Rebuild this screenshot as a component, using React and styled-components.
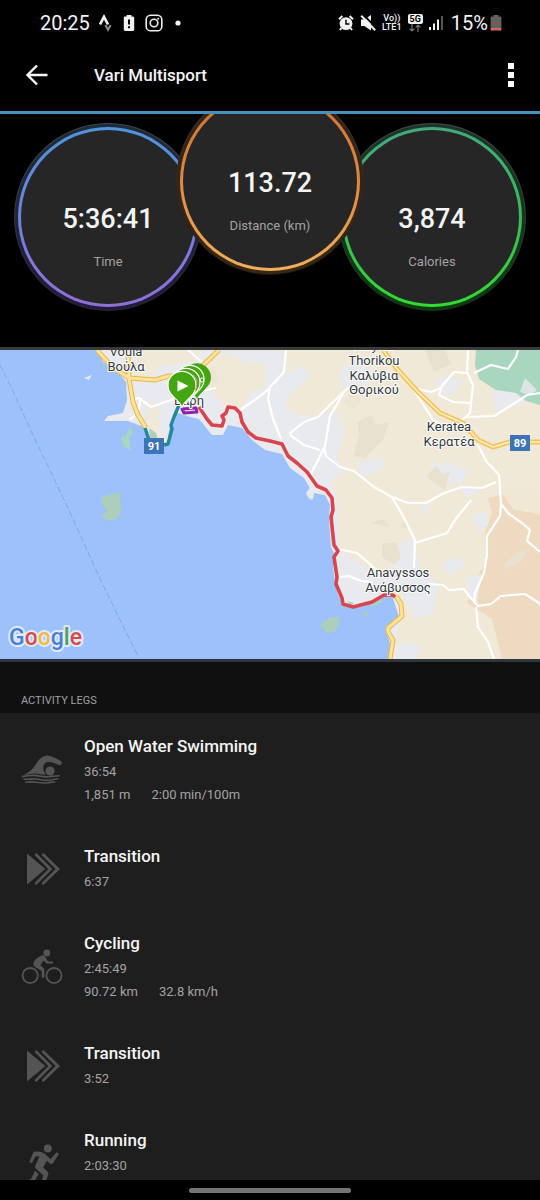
import React from "react";
import styled, { createGlobalStyle } from "styled-components";

const legs = [
  { sport: "swim", name: "Open Water Swimming", time: "36:54", details: ["1,851 m", "2:00 min/100m"] },
  { sport: "transition", name: "Transition", time: "6:37" },
  { sport: "bike", name: "Cycling", time: "2:45:49", details: ["90.72 km", "32.8 km/h"] },
  { sport: "transition", name: "Transition", time: "3:52" },
  { sport: "run", name: "Running", time: "2:03:30", details: [] },
];

const dials = [
  { value: "5:36:41", label: "Time", ring: "#4f95dc, #6f83d8, #8f6fd6", halo: "#1d2c3c, #231b3a", edge: "#444444, #262433" },
  { value: "113.72", label: "Distance (km)", ring: "#cf7230, #db8a45, #f0b05c", halo: "#33221a, #3a2814", edge: "#3c3c3c, #1c1712", raised: true },
  { value: "3,874", label: "Calories", ring: "#45a87c, #3cb85c, #35d935", halo: "#1a3529, #0d3c10", edge: "#484848, #1d2a1d" },
];

const StatusIcons = () => (
  <StatusGroup>
    <svg width="14" height="18" viewBox="0 0 14 18" fill="none" strokeWidth="2.6">
      <path d="M1 10.5 5 2.8l4 7.7" stroke="#f2f2f2" />
      <path d="M6.4 11 9 15.8l2.6-4.8" stroke="#8b8b8b" strokeWidth="2" />
    </svg>
    <svg width="12" height="18" viewBox="0 0 12 18">
      <path d="M3.6 1h4.8v1.6h1.4c.8 0 1.4.6 1.4 1.4v11.6c0 .8-.6 1.4-1.4 1.4H2.2c-.8 0-1.4-.6-1.4-1.4V4c0-.8.6-1.4 1.4-1.4h1.4z" fill="#f2f2f2" />
      <path d="M5 5.6h2v5H5zM5 12.2h2v2H5z" fill="#000" />
    </svg>
    <svg width="18" height="18" viewBox="0 0 18 18" fill="none" stroke="#ededed" strokeWidth="1.6">
      <rect x="1.2" y="1.2" width="15.6" height="15.6" rx="4.4" />
      <circle cx="9" cy="9" r="3.8" />
      <circle cx="13.2" cy="4.8" r="1" fill="#ededed" stroke="none" />
    </svg>
    <svg width="18" height="18" viewBox="0 0 18 18">
      <circle cx="9" cy="9" r="2.6" fill="#f2f2f2" />
    </svg>
  </StatusGroup>
);

const SignalIcons = () => (
  <SignalGroup>
    <svg width="16" height="18" viewBox="0 0 16 18">
      <circle cx="8" cy="9.6" r="6.4" fill="#f2f2f2" />
      <path d="M1 5.2 4.4 2M15 5.2 11.6 2M3.4 14 2 16M12.6 14l1.4 2" stroke="#f2f2f2" strokeWidth="2" />
      <path d="M8 5.8v4.2h3.4" fill="none" stroke="#000" strokeWidth="1.4" />
    </svg>
    <svg width="16" height="18" viewBox="0 0 16 18">
      <path d="M1 5.600h3.400L11 1v15.600L4.400 12H1z" fill="#f2f2f2" />
      <path d="M2.800 0 16 13.600" stroke="#000" strokeWidth="2" />
      <path d="M1.200 1.800 15.200 16.200" stroke="#f2f2f2" strokeWidth="2" />
    </svg>
    <NetworkText>
      <span>Vo))</span>
      <span>LTE1</span>
    </NetworkText>
    <NetworkBadge>
      <b>5G</b>
      <svg width="12" height="8" viewBox="0 0 12 8" fill="none" stroke="#777" strokeWidth="1.2">
        <path d="M3 0v7M.6 4.6 3 7l2.4-2.4M9 8V1M6.6 3.4 9 1l2.4 2.4" />
      </svg>
    </NetworkBadge>
    <svg width="14" height="16" viewBox="0 0 14 16">
      <path d="M0 12h2v3H0zM4 8.6h2V15H4zM8 4.6h2V15H8z" fill="#f2f2f2" />
      <path d="M12 1h2v14h-2z" fill="#555" />
    </svg>
    <Battery>
      15%
      <svg width="12" height="16" viewBox="0 0 12 16">
        <path d="M3.6 0h4.8v1.6h1.8c.7 0 1.2.5 1.2 1.2V13H.6V2.8c0-.7.5-1.2 1.2-1.2h1.8z" fill="#66605e" />
        <path d="M.6 13h10.8v1.4c0 .6-.4 1-1 1H1.6c-.6 0-1-.4-1-1z" fill="#e06464" />
      </svg>
    </Battery>
  </SignalGroup>
);

const LegIcon = ({ sport }) => (
  <svg width="42" height="42" viewBox="0 0 42 42" fill="#545454">
    {sport === "swim" && (
      <>
        <path d="M2.6 24.800C8 23 12.600 18.400 16.400 12c2-3.400 5.600-6.200 10-6.600 4.200.4 9.600 3.200 13.400 5.600 1.600 1 1 4.200-.8 4.200-4.400-1.200-8.200-3.600-11.800-3.200-3.600.4-5.200 3.200-5 6.600.2 2.400 1 4.200 2.800 5.600-4 .8-6.600-.6-10.600-.8-4.200-.2-8 1.600-11.800 1.400z" />
        <circle cx="29" cy="21" r="4.600" />
        <g fill="none" stroke="#545454" strokeWidth="1.600">
          <path d="M.8 26.400c6-.4 8.200-1.400 13-1 5 .4 8 1.800 13 1.400 4.600-.4 8-1 12-1" />
          <path d="M2.400 29.200c5.400.4 8-.6 12.400-.2 5 .4 7.600 1.600 12 1.200 4-.2 7-1.200 10.600-1.400" />
          <path d="M4 32.200c5-.2 7.400-.6 11 0 4.600.8 7.400 1.200 11.400.6 3.200-.4 5.600-.8 8-1" />
        </g>
      </>
    )}
    {sport === "transition" && (
      <>
        <path d="M6 5.600 24.400 21 6 36.400z" />
        <path d="M14 5.600h1.800L31.400 21 15.800 36.400H14v-2L27.400 21 14 7.600z" />
        <path d="M21 5.600h2L39 21 23 36.400h-2v-2L34.600 21 21 7.600z" />
      </>
    )}
    {sport === "bike" && (
      <>
        <g fill="none" stroke="#545454" strokeWidth="1.800">
          <circle cx="9.200" cy="28.600" r="7.600" />
          <circle cx="33" cy="28.600" r="7.600" />
        </g>
        <circle cx="25.800" cy="6" r="3.400" />
        <path d="M13.400 13.800c1.800-2.400 5-4.600 8.200-5.600 1.200-.2 2 .6 2.800 2l2.600 4.200h5v2.200h-6.400l-3-3-3.200 4.600 3.200 3c.6.6.8 1.200.8 2v7c0 .8-2.400.8-2.600 0l-.2-6.200-6.800-4.200c-1.800-1.400-1.800-3.600-.4-6z" />
      </>
    )}
    {sport === "run" && (
      <>
        <circle cx="26.800" cy="4.400" r="4" />
        <path d="M15 7.600c3.600-.4 7 .8 9.600 3l5 4.600 5.600-6.400c1-.8 3 .6 2.400 1.800l-5.600 8.600c-.8 1-2 1-3 .2l-3.200-2.600-3.600 6.800 4.400 4.200c.8.8 1 1.600.6 2.800L24 41h-4l2.200-9.800-7-6.200c-1.200-1-1.400-2.200-.8-3.600l4-9-3.800-.2-3.400 6.400c-.8 1-2.800.4-2.600-1l3.200-8c.6-1.400 1.800-2 3.200-2z" />
        <path d="m14 26.600 3.600 3.600-4.400 7L7 41.600H3.400v-3l7-4z" />
      </>
    )}
  </svg>
);

const RouteMap = () => (
  <MapSvg viewBox="0 350 540 309" role="img" aria-label="Route map">
    <rect x="0" y="350" width="540" height="309" fill="#9dc1fa" />
    {/* coastline */}
    <path
      d="M97 350l6 12 15 10 8 10 1 18-4 13-15 3-4 5h24l8 3 8 3 5 10-1 9h18l3-15 3-13 6-5 12 4 9 2 13 16h11l5-10 14 3 10 12 13 10 17 4 8 14 14 10 7 12-1 10 3-1 1-6 11 2 5 10-1 16 2 26 4 8-2 12 2 16 3 12 6 10 10 3 21-6 9-6 8-1 7 22-13 14 4 12-1 19h151V350z"
      fill="#e9eaee"
    />
    <g fill="#f1e9d7">
      <path d="M135 350h67l-8 12-34 4-12 17-14-8zM203 359l25-5 22 10 15-1v24l-16 6-7 14-8 4-9-7-12-9zM150 400l10 8-2 27 11 3-4 7-15-4-4-26zM288 350h252v309H394l2-20 6-24-7-24 12-12 2-32-14-14-20 5-19-14-18-18-7-26 14-7-8-16 8-28-9-18-31 7-20-11 6-13 20-17z" />
      <path d="M337 500l50 8 20 34-11 27-23 3-33-22zM281 350l30 6-23 18z" />
    </g>
    <g fill="#eddac0">
      <path d="M488 498l20-5 14 12 18 7v147h-38l-10-40-14-9-11-7 12-30 8-12-2-30 7-18z" />
      <path d="M500 490l22-6 18 10v20l-26-4z" fill="#f1e7d5" />
    </g>
    <g fill="#e9eaee">
      <path d="M340 368l20-8 14 14-10 14-23-1zM430 465l18-4 20 10-6 14-21-4zM493 390l21-13 20 8-12 20-26 6zM356 463l22-6 8 9-22 12zM445 560l16-2 4 8-13 8-9-4zM472 515l14-3 3 12-9 8zM400 545l14-9 6 34 18 14-4 30-19 4-14-24-10-25zM467 577l14-2-4 30-8-8zM396 645l10-4 14 6-4 12h-21z" />
      <path d="M436 380l12-5 15 6-8 13-16-2zM421 502l10 3-5 9-6-3zM461 489l12-3 6 6-13 5z" />
    </g>
    <g fill="#e9e1cf">
      <path d="M425 350h20l6 14-17 8zM357 422l16-7 2 10 14-3-6 18-18 18-11-2 5-22zM427 475l10-10 5 9 8-2-5 18-14-9zM382 544l14-2 5 15-7 8-12-8zM370 523l13-4 7 8zM401 526l5-8 3 11zM505 565l10-12 14-4-10 14-14 6z" />
      <path d="M206 370l9-4 4 17-9-2zM344 400l11-7 7 9-12 8z" opacity=".5" />
    </g>
    <g fill="#a9d6bf">
      <path d="M476 350h64v55l-14-4-10-8-20-3-17-11-4-14z" />
      <path d="M520 392l5-14 12 12-7 5z" fill="#dce5e3" />
      <path d="M121 438l5-3 4-8 3 5-4 6 2 12-7-3z" />
      <path d="M102 497l10-3 9-2-1 8 2 8-5 11-9 2-8-6 7-3-5-8zM320 625l9-7 11-1-3 13-9 4z" fill="#accfbb" />
      <path d="M370 601l12-3-1 5-11 4zM363 613l5-2-2 7zM347 601l7 2-3 3zM149 428l7 5 2 8-8-3z" fill="#accfbb" />
    </g>
    <path d="M84 378l8-3-3 5zM306 493l6-8 4 6-7 8z" fill="#e9eaee" />
    <path d="M0 365l12 24 20 44 36 75 33 73 37 75" fill="none" stroke="#7fa6e4" strokeDasharray="6 3" />

    <g fill="none" stroke="#fff" strokeWidth="2.200" strokeLinejoin="round">
      <path d="M130 400l9-2 12 9 40-14 25-5M130 420l8-8 3-14M188 350l16 14M286 350l-2 22-14 15-2 12 5 20 8 20M240 410l15-10 15-12M289 434l15-12 14-5 14-14 15-14 5-3M343 394l-13 22-5 30-15 30M290 435l14 10 16 5M324 448l2 8 14 11 14 4 20 16 16 9 18 7h18l16-9 20-7 20 1 14-6" />
      <path d="M468 350l-1 22 6 13-3 28-8 7M468 373l-14-1-12 14-3 9 14 7 18 1M441 388l-10 4-17-4M414 390l19 30 10 6M474 373l17-8 17 4 8-12 2-7M466 417l28-1 21-13 12-8 13-2" />
      <path d="M478 445l8 16 13 14 1 13 1 16 8 10 13 9 8 7-3 11 13 11M501 504l-1 12-13 20v19l-3 18-9 20-1 10M391 496l10 16 14 28-1 28M471 500l-16 20-8 13-32 10M338 549l19 4 14 12 10 9M340 577l9-1 12 5 12 1M428 584l15 1 6 5 15-1 5 7 9 10 13-2 10-8 24-2 14 9 4 5M476 607l2 20 10 15 6 17" />
    </g>
    <g fill="none" strokeLinejoin="round">
      <path d="M97 350l15 17 17 11 26 2 14-4h15M128 350l1 29 4 23 5 13 8 13M197 371l22-21" stroke="#e9b64c" strokeWidth="5" />
      <path d="M97 350l15 17 17 11 26 2 14-4h15M128 350l1 29 4 23 5 13 8 13M197 371l22-21" stroke="#fde49a" strokeWidth="3" />
      <path d="M383 350l15 20 20 22 22 21 23 10 15 17 15 7 17-5h30" stroke="#f3c560" strokeWidth="5" />
      <path d="M383 350l15 20 20 22 22 21 23 10 15 17 15 7 17-5h30" stroke="#fff0c0" strokeWidth="1.500" />
      <path d="M396 596l5 8 1 12-14 12v4l5 8-3 19" stroke="#e9b64c" strokeWidth="5" />
      <path d="M396 596l5 8 1 12-14 12v4l5 8-3 19" stroke="#fde49a" strokeWidth="3" />
      <path d="M145 428l4 12M164 445l4-1 4-15-1-4 3-8 5-12" stroke="#22889c" strokeWidth="3.400" />
      <path d="M182 409l14-1 1 4-13 1z" stroke="#8e24aa" strokeWidth="3" />
      <path
        d="M199 407l8 12 5 6 10 1 2-6-2-4 4-3 2-6 7 1 5 5 2 9 6 10 8 6 14 3 12 3 6 12 9 7 10 9 10 14 9 4 6 8 1 12-2 7 3 28 4 6-4 6 3 20-1 7 6 14 1 6 10 3 19-5 12-7h9l2 2"
        stroke="#d64550"
        strokeWidth="3.600"
      />
    </g>

    <MapLabels textAnchor="middle">
      <text x="126" y="356">Voula</text>
      <text x="126" y="371">Βούλα</text>
      <text x="374" y="350">Kalyvia</text>
      <text x="374" y="365">Thorikou</text>
      <text x="374" y="380">Καλύβια</text>
      <text x="374" y="394">Θορικού</text>
      <text x="449" y="431">Keratea</text>
      <text x="449" y="446">Κερατέα</text>
      <text x="398" y="577">Anavyssos</text>
      <text x="398" y="592">Ανάβυσσος</text>
      <text x="189" y="405">Βάρη</text>
    </MapLabels>
    <g fill="#3c74ba">
      <rect x="144" y="438" width="20" height="16" />
      <rect x="510" y="435" width="20" height="16" />
    </g>
    <RoadNumbers textAnchor="middle">
      <text x="154" y="450">91</text>
      <text x="520" y="447">89</text>
    </RoadNumbers>

    <g stroke="#fff" fill="#43a510">
      {[[197, 378], [190, 380], [186, 383], [182, 386]].map(([x, y]) => (
        <path key={x} d={`M${x} ${y + 21}c-2-5-6-7-9-11a14 14 0 1 1 18 0c-3 4-7 6-9 11z`} strokeWidth={x === 197 ? 0 : 1.200} />
      ))}
      <circle cx="202" cy="380" r="2" fill="none" />
      <path d="M193 375c4 3 5 9 2 15" fill="none" stroke="#ef9a9a" />
      <path d="M177.500 380.500v11l11-5.500z" fill="#fff" stroke="none" />
    </g>
    <Logo x="9" y="645">
      <tspan fill="#4a80d8">G</tspan>
      <tspan fill="#d64a45">o</tspan>
      <tspan fill="#efbb3c">o</tspan>
      <tspan fill="#4a80d8">g</tspan>
      <tspan fill="#45a35c">l</tspan>
      <tspan fill="#d64a45">e</tspan>
    </Logo>
  </MapSvg>
);

const App = () => {
  return (
    <>
      <GlobalStyle />
      <Screen>
        <StatusBar>
          <Clock>20:25</Clock>
          <StatusIcons />
          <SignalIcons />
        </StatusBar>
        <AppBar>
          <IconButton type="button" aria-label="Back">
            <svg width="24" height="24" viewBox="0 0 24 24" fill="none" stroke="#f5f5f5" strokeWidth="2.400">
              <path d="M22.500 12H3M12 2.500 2.500 12l9.500 9.500" />
            </svg>
          </IconButton>
          <Title>Vari Multisport</Title>
          <IconButton type="button" aria-label="More options">
            <svg width="24" height="24" viewBox="0 0 24 24" fill="#fff">
              <path d="M9 0h6v6H9zM9 9h6v6H9zM9 18h6v6H9z" />
            </svg>
          </IconButton>
        </AppBar>
        <Dials>
          {dials.map((dial) => (
            <Dial key={dial.label} $halo={dial.halo} $edge={dial.edge} $raised={dial.raised}>
              <Ring $colors={dial.ring}>
                <Face>
                  <Value>{dial.value}</Value>
                  <Label>{dial.label}</Label>
                </Face>
              </Ring>
            </Dial>
          ))}
        </Dials>
        <MapPanel>
          <RouteMap />
        </MapPanel>
        <SectionTitle>ACTIVITY LEGS</SectionTitle>
        <LegList>
          {legs.map((leg, i) => (
            <Leg key={i}>
              <LegIcon sport={leg.sport} />
              <div>
                <LegName>{leg.name}</LegName>
                <LegLine>{leg.time}</LegLine>
                {leg.details && (
                  <LegLine>
                    {leg.details.map((detail) => (
                      <span key={detail}>{detail}</span>
                    ))}
                  </LegLine>
                )}
              </div>
            </Leg>
          ))}
        </LegList>
        <NavBar>
          <Handle />
        </NavBar>
      </Screen>
    </>
  );
};

const GlobalStyle = createGlobalStyle`
  * {
    box-sizing: border-box;
  }

  body {
    margin: 0;
    background: #000;
    color: #f5f5f5;
    font-family: Roboto, "Noto Sans", sans-serif;
  }
`;

const Screen = styled.div`
  height: 100vh;
  display: flex;
  flex-direction: column;
  overflow: hidden;

  > * {
    flex-shrink: 0;
  }
`;

const StatusBar = styled.div`
  height: 46px;
  padding: 0 38px 0 40px;
  display: flex;
  align-items: center;
`;

const Clock = styled.span`
  font-size: 20px;
  line-height: 24px;
`;

const StatusGroup = styled.div`
  margin-left: 9px;
  display: flex;
  align-items: center;
  gap: 10px;

  svg:last-child {
    margin-left: -4px;
  }
`;

const SignalGroup = styled.div`
  margin-left: auto;
  display: flex;
  align-items: center;
  gap: 6px;
`;

const NetworkText = styled.div`
  display: flex;
  flex-direction: column;
  align-items: center;
  font-size: 9px;
  line-height: 9px;
  font-weight: 500;
`;

const NetworkBadge = styled.div`
  display: flex;
  flex-direction: column;
  align-items: center;

  b {
    padding: 0 2px;
    border-radius: 2px;
    background: #f2f2f2;
    color: #000;
    font-size: 9px;
    line-height: 10px;
  }
`;

const Battery = styled.div`
  margin-left: 2px;
  display: flex;
  align-items: center;
  gap: 2px;
  font-size: 20px;
  line-height: 24px;
`;

const AppBar = styled.header`
  height: 68px;
  padding: 0 17px 8px 25px;
  display: flex;
  align-items: center;
  border-bottom: 3px solid #4591bd;
`;

const IconButton = styled.button`
  padding: 0;
  border: 0;
  display: flex;
  background: none;
  cursor: pointer;
`;

const Title = styled.h1`
  flex: 1;
  margin: 0 0 0 45px;
  font-size: 17px;
  line-height: 24px;
  font-weight: 500;
`;

const Dials = styled.section`
  height: 233px;
  padding-top: 9px;
  display: flex;
  justify-content: center;
  align-items: flex-start;
  overflow: hidden;
`;

const Dial = styled.div`
  position: relative;
  z-index: ${({ $raised }) => ($raised ? 1 : 0)};
  flex-shrink: 0;
  width: 188px;
  height: 188px;
  margin: ${({ $raised }) => ($raised ? "-36px -26px 0" : "0")};
  padding: 3px;
  border: 1px solid transparent;
  border-radius: 50%;
  background:
    linear-gradient(${({ $halo }) => $halo}) padding-box,
    linear-gradient(${({ $edge }) => $edge}) border-box;
`;

const Ring = styled.div`
  height: 100%;
  padding: 3px;
  border-radius: 50%;
  background: linear-gradient(${({ $colors }) => $colors});
`;

const Face = styled.div`
  height: 100%;
  padding-top: 71px;
  border-radius: 50%;
  background: #262626;
  text-align: center;
`;

const Value = styled.div`
  font-size: 27px;
  line-height: 36px;
  font-weight: 500;
`;

const Label = styled.div`
  margin-top: 15px;
  color: #a3a3a3;
  font-size: 13px;
  line-height: 20px;
`;

const MapPanel = styled.section`
  border-top: 3px solid #3a3a3a;
  border-bottom: 3px solid #2f353c;
`;

const MapSvg = styled.svg`
  display: block;
  width: 100%;
`;

const MapLabels = styled.g`
  fill: #33373d;
  font-size: 13px;
  font-weight: 400;
  stroke: #fff;
  stroke-width: 2px;
  stroke-linejoin: round;
  paint-order: stroke;
`;

const RoadNumbers = styled.g`
  fill: #fff;
  font-size: 11px;
  font-weight: 700;
`;

const Logo = styled.text`
  font-family: Roboto, sans-serif;
  font-size: 23px;
  font-weight: 500;
  stroke: #dfeafc;
  stroke-width: 4px;
  stroke-linejoin: round;
  paint-order: stroke;
`;

const SectionTitle = styled.h2`
  margin: 0;
  padding: 31px 21px 4px;
  background: #101010;
  color: #a0a0a0;
  font-size: 11px;
  line-height: 16px;
  font-weight: 400;
`;

const LegList = styled.ul`
  flex: 1 1 0;
  min-height: 0;
  margin: 0;
  padding: 0;
  overflow-y: auto;
  scrollbar-width: none;
  background: #1e1e1e;
  list-style: none;
`;

const Leg = styled.li`
  padding: 22px 21px 17px;
  display: flex;
  align-items: center;
  gap: 21px;
`;

const LegName = styled.h3`
  margin: 0 0 3px;
  font-size: 17px;
  line-height: 22px;
  font-weight: 500;
`;

const LegLine = styled.div`
  min-height: 23px;
  display: flex;
  gap: 21px;
  color: #a3a3a3;
  font-size: 13px;
  line-height: 23px;
`;

const NavBar = styled.div`
  height: 20px;
  display: flex;
  justify-content: center;
  align-items: center;
  background: #000;
`;

const Handle = styled.div`
  width: 30%;
  height: 5px;
  border-radius: 3px;
  background: #757575;
`;

export default App;
